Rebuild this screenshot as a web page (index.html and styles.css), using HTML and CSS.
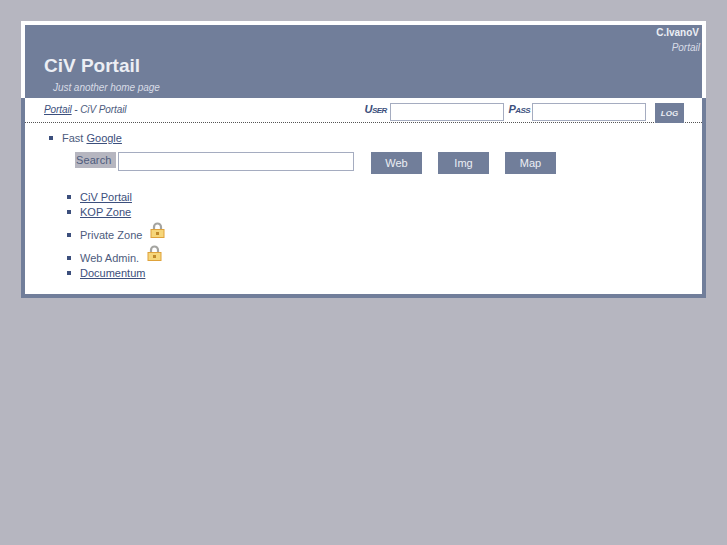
FILE: index.html
```html
<!DOCTYPE html>
<html lang="en">
<head>
    <meta charset="UTF-8">
    <meta name="viewport" content="width=device-width, initial-scale=1.0">
    <title>CiV Portail</title>
    <link rel="stylesheet" href="styles.css">
</head>
<body>
    <div class="page">
        <!-- Header -->
        <div class="header">
            <div class="header-right">
                <div class="owner">C.IvanoV</div>
                <div class="section">Portail</div>
            </div>
            <h1 class="site-title">CiV Portail</h1>
            <div class="tagline">Just another home page</div>
        </div>

        <div class="main">
            <!-- Breadcrumb and login -->
            <div class="topbar">
                <div class="crumbs"><a href="#">Portail</a> - CiV Portail</div>
                <form class="login">
                    <label class="login-label">User</label>
                    <input class="login-input" type="text">
                    <label class="login-label pass-label">Pass</label>
                    <input class="login-input" type="password">
                    <button class="login-button" type="button">Log</button>
                </form>
            </div>

            <!-- Content -->
            <div class="content">
                <ul class="list fast-list">
                    <li>Fast <a class="google" href="#">Google</a></li>
                </ul>
                <form class="search">
                    <label class="search-label">Search</label>
                    <input class="search-input" type="text">
                    <button class="search-button" type="button">Web</button>
                    <button class="search-button" type="button">Img</button>
                    <button class="search-button" type="button">Map</button>
                </form>
                <ul class="list links">
                    <li><a href="#">CiV Portail</a></li>
                    <li><a href="#">KOP Zone</a></li>
                    <li class="locked">Private Zone
                        <svg class="lock" width="15" height="16" viewBox="0 0 15 16">
                            <path d="M4 8V5a3.5 3.5 0 0 1 7 0v3" fill="none" stroke="#a4a4a0" stroke-width="2.2"/>
                            <rect x="1" y="7.5" width="13" height="8" fill="#f6d67a" stroke="#dfa23a"/>
                            <rect x="6" y="10" width="3" height="3" fill="#c08a2a"/>
                        </svg>
                    </li>
                    <li class="locked">Web Admin.
                        <svg class="lock" width="15" height="16" viewBox="0 0 15 16">
                            <path d="M4 8V5a3.5 3.5 0 0 1 7 0v3" fill="none" stroke="#a4a4a0" stroke-width="2.2"/>
                            <rect x="1" y="7.5" width="13" height="8" fill="#f6d67a" stroke="#dfa23a"/>
                            <rect x="6" y="10" width="3" height="3" fill="#c08a2a"/>
                        </svg>
                    </li>
                    <li><a href="#">Documentum</a></li>
                </ul>
            </div>
        </div>
    </div>
</body>
</html>
```

FILE: styles.css
```css
/* General Reset */
* {
    margin: 0;
    padding: 0;
    box-sizing: border-box;
    font-family: 'Liberation Sans', Arial, sans-serif;
}

body {
    background-color: #b6b6c0;
    padding: 21px;
}

a {
    color: #3c4f7c;
}

.page {
    width: 685px;
}

/* Header */
.header {
    height: 77px;
    background-color: #717e9a;
    border: 4px solid #fff;
    border-bottom: none;
    padding-left: 19px;
    position: relative;
    color: #eceef4;
}

.header-right {
    position: absolute;
    top: 2px;
    right: 2px;
    text-align: right;
    font-size: 10px;
}

.owner {
    font-weight: bold;
    margin-right: 1px;
}

.section {
    font-style: italic;
    margin-top: 4px;
    color: #d8dce6;
}

.site-title {
    font-size: 19px;
    padding-top: 30px;
    line-height: 22px;
}

.tagline {
    font-size: 10px;
    font-style: italic;
    margin: 5px 0 0 9px;
    letter-spacing: -0.05px;
    color: #d8dce6;
}

/* Main box */
.main {
    background-color: #fff;
    border: 4px solid #717e9a;
    border-top: none;
    height: 200px;
}

.topbar {
    height: 25px;
    display: flex;
    align-items: flex-end;
    justify-content: space-between;
    border-bottom: 1px dotted #555;
    padding: 0 18px 0 19px;
}

.crumbs {
    font-size: 10px;
    font-style: italic;
    letter-spacing: -0.1px;
    color: #4d5b7d;
    padding-bottom: 7px;
}

.login {
    display: flex;
    align-items: flex-start;
    height: 20px;
}

.login-label {
    font-size: 11px;
    font-weight: bold;
    font-style: italic;
    font-variant: small-caps;
    letter-spacing: -0.6px;
    color: #3c4f7c;
    margin: 1px 3px 0 0;
}

.pass-label {
    margin: 1px 2px 0 5px;
}

.login-input {
    width: 114px;
    height: 18px;
    margin-top: 1px;
    border: 1px solid #a5acc0;
}

.login-button {
    width: 29px;
    height: 20px;
    margin-top: 1px;
    margin-left: 9px;
    background-color: #717e9a;
    border: none;
    color: #eceef4;
    font-size: 8px;
    font-weight: bold;
    font-style: italic;
    text-transform: uppercase;
}

/* Content */
.content {
    font-size: 11px;
    color: #4d5b7d;
}

.list {
    list-style: none;
}

.list li {
    position: relative;
    padding-left: 14px;
}

.list li::before {
    content: "";
    position: absolute;
    left: 1px;
    top: 5px;
    width: 4px;
    height: 4px;
    background-color: #3c4f7c;
}

.fast-list {
    margin: 8px 0 0 23px;
    line-height: 14px;
}

.google {
    padding-right: 2px;
}

.search {
    display: flex;
    align-items: flex-start;
    margin: 7px 0 0 50px;
}

.search-label {
    background-color: #b6b6c0;
    padding: 1px 1px 0;
    height: 16px;
    line-height: 14px;
    width: 41px;
    letter-spacing: 0.1px;
}

.search-input {
    width: 236px;
    height: 19px;
    margin-left: 2px;
    border: 1px solid #a5acc0;
}

.search-button {
    width: 51px;
    height: 22px;
    background-color: #717e9a;
    border: none;
    color: #eceef4;
    font-size: 11px;
    margin-left: 16px;
}

.search-input + .search-button {
    margin-left: 17px;
}

.links {
    margin: 16px 0 0 41px;
}

.links li {
    line-height: 15px;
}

.list li.locked {
    height: 23px;
    padding-top: 8px;
}

.links li.locked::before {
    top: 13px;
}

.lock {
    position: absolute;
    top: 2px;
}

li.locked:nth-child(3) .lock {
    left: 84px;
}

li.locked:nth-child(4) .lock {
    left: 81px;
}
```
